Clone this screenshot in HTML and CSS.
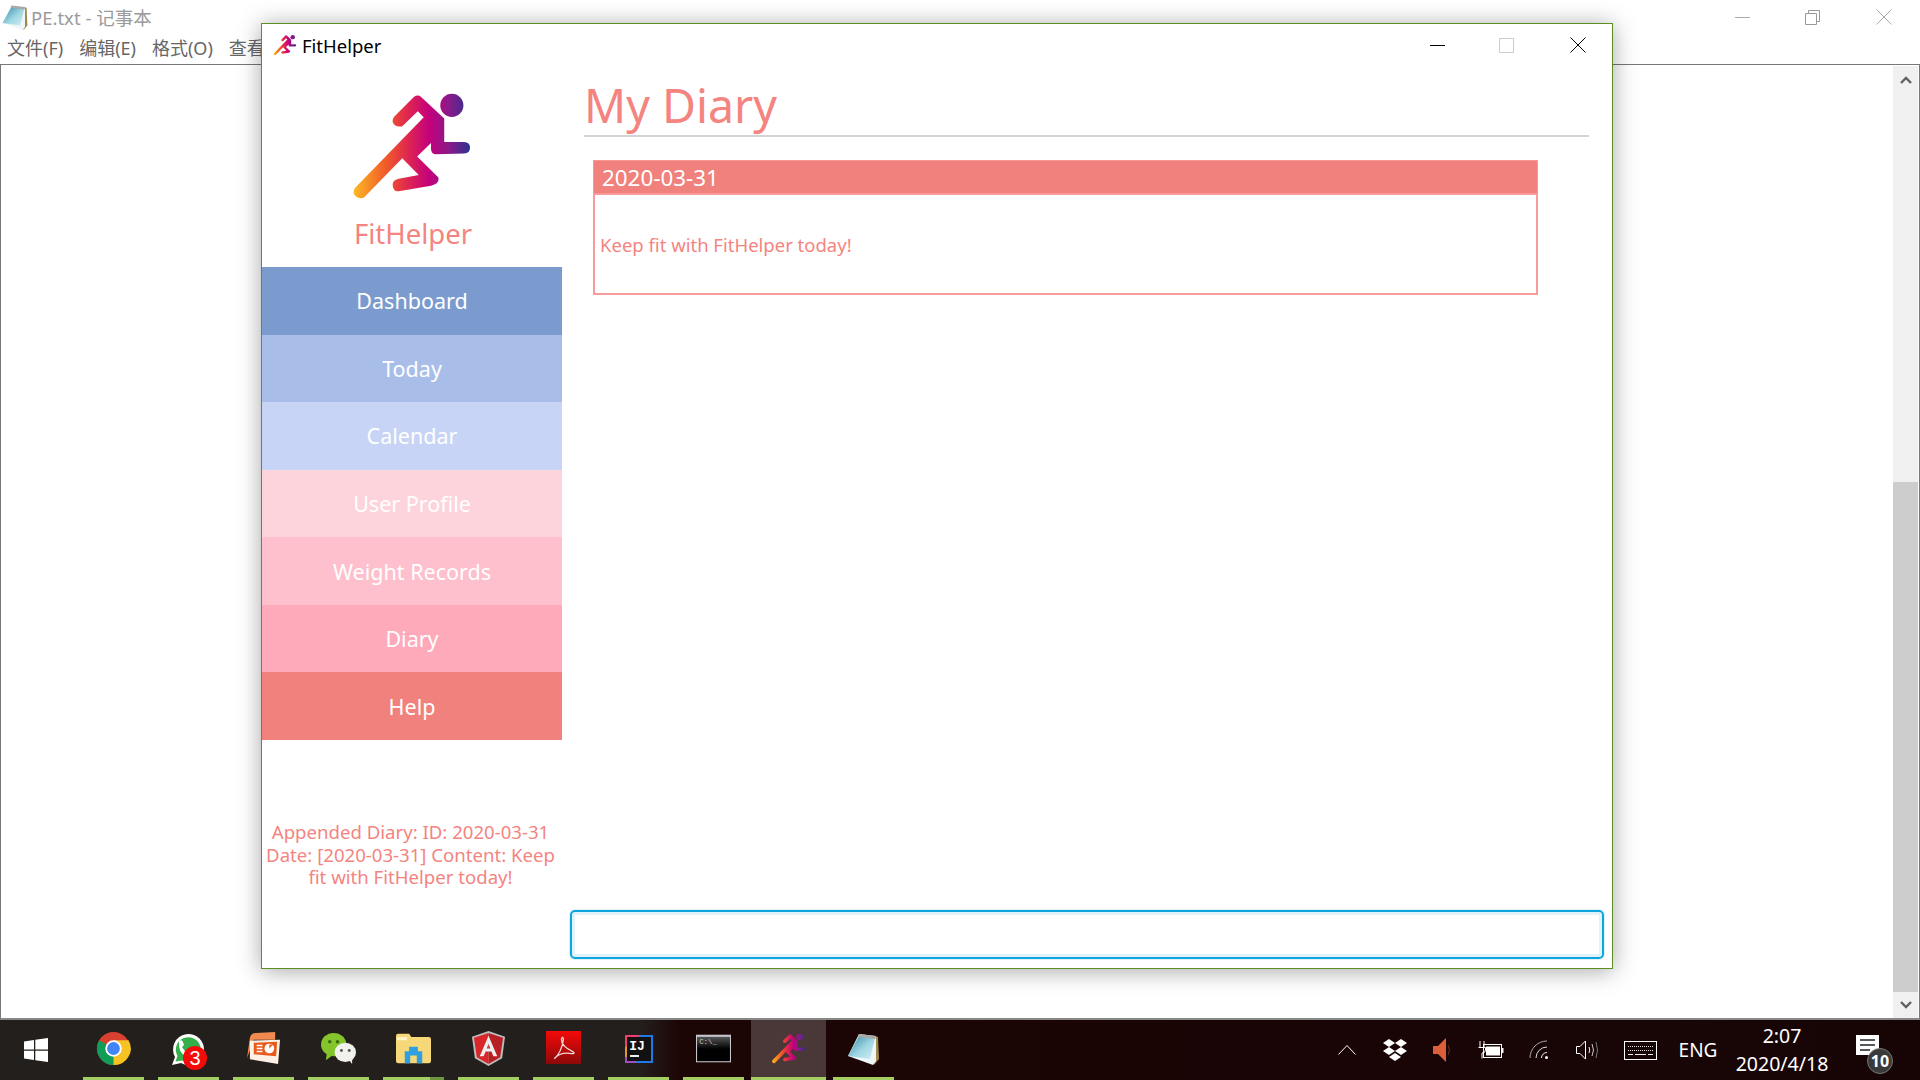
FILE: index.html
```html
<!DOCTYPE html>
<html>
<head>
<meta charset="utf-8">
<title>FitHelper</title>
<link rel="stylesheet" href="styles.css">
</head>
<body>
<svg class="defs" width="0" height="0">
  <defs>
    <linearGradient id="runGrad" gradientUnits="userSpaceOnUse" x1="70" y1="0" x2="423" y2="0">
      <stop offset="0" stop-color="#fdb924"/>
      <stop offset="0.28" stop-color="#f15a29"/>
      <stop offset="0.46" stop-color="#e0284f"/>
      <stop offset="0.65" stop-color="#c4007c"/>
      <stop offset="0.82" stop-color="#8a1a88"/>
      <stop offset="1" stop-color="#2e3192"/>
    </linearGradient>
    <linearGradient id="padGrad" x1="0" y1="0" x2="1" y2="1">
      <stop offset="0" stop-color="#2f86a5"/>
      <stop offset="0.55" stop-color="#9fd6e2"/>
      <stop offset="1" stop-color="#d5f0f4"/>
    </linearGradient>
    <linearGradient id="pdfGrad" x1="0" y1="0" x2="0" y2="1">
      <stop offset="0" stop-color="#f40a0a"/>
      <stop offset="1" stop-color="#8d0808"/>
    </linearGradient>
    <linearGradient id="cmdGrad" x1="0" y1="0" x2="0" y2="1">
      <stop offset="0" stop-color="#555"/>
      <stop offset="0.5" stop-color="#000"/>
    </linearGradient>
    <symbol id="runner" viewBox="60 30 375 330">
      <circle cx="368" cy="72" r="35" fill="url(#runGrad)"/>
      <path fill="url(#runGrad)" d="M265 90 L283 108 L75 322 Q66 336 76 346 Q90 358 103 350 L218 232 L268 283 L207 294 Q188 298 189 314 Q191 334 207 332 L305 315 Q328 310 328 295 Q328 288 322 285 L263 227 L305 186 L305 205 Q306 220 320 220 L405 218 Q423 216 423 200 Q423 184 405 183 L345 183 L345 112 L275 47 Q265 38 253 47 L195 105 Q186 115 190 125 Q196 139 218 135 Z"/>
    </symbol>
    <symbol id="notepad-ic" viewBox="0 0 35 35">
      <path d="M29 5 L32 6 L33 28 L28 34 Z" fill="#a08a50"/>
      <path d="M13 3 L30 5 L30 30 L27 34 L2 25 Z" fill="#eef6f7"/>
      <path d="M13 5 L29 7 L24 28 L2 25 Z" fill="url(#padGrad)"/>
      <path d="M13 3 L30 5 L29.500 8 L12 6 Z" fill="#a9a9a9"/>
    </symbol>
  </defs>
</svg>

<div class="screen">
  <div class="notepad">
    <div class="np-title">
      <svg class="np-icon"><use href="#notepad-ic"/></svg>
      <span>PE.txt - 记事本</span>
      <div class="np-controls">
        <i class="np-min"></i>
        <svg class="np-restore" viewBox="0 0 15 15"><path d="M3.500 3.500 V.5 H14.500 V11.500 H11.500 M.5 3.500 H11.500 V14.500 H.5 Z" fill="none" stroke="#999"/></svg>
        <svg class="np-close" viewBox="0 0 16 16"><path d="M.5 .5 L15.500 15.500 M15.500 .5 L.5 15.500" stroke="#aaa"/></svg>
      </div>
    </div>
    <div class="np-menu">
      <span>文件(F)</span>
      <span>编辑(E)</span>
      <span>格式(O)</span>
      <span>查看(V)</span>
    </div>
    <div class="np-edit">
      <div class="np-scroll">
        <div class="sb-btn"><svg viewBox="0 0 12 9"><path d="M1 8 L6 3 L11 8" fill="none" stroke="#606060" stroke-width="2.400"/></svg></div>
        <div class="sb-thumb"></div>
        <div class="sb-btn"><svg viewBox="0 0 12 9"><path d="M1 1 L6 6 L11 1" fill="none" stroke="#606060" stroke-width="2.400"/></svg></div>
      </div>
    </div>
  </div>

  <div class="taskbar">
    <div class="start">
      <svg viewBox="0 0 24 24"><path fill="#fff" d="M0 3.500 L10 2 V11.400 H0 Z M11.300 1.800 L24 0 V11.400 H11.300 Z M0 12.700 H10 V22 L0 20.500 Z M11.300 12.700 H24 V24 L11.300 22.200 Z"/></svg>
    </div>
    <div class="task">
      <svg viewBox="0 0 34 34">
        <circle cx="17" cy="17" r="16" fill="#d8412f"/>
        <path d="M17 17 L3.100 9 A16 16 0 0 0 17 33 Z" fill="#0f9d58"/>
        <path d="M17 9 H31.600 A16 16 0 0 1 17 33 Z" fill="#f7c223"/>
        <circle cx="17" cy="17" r="8" fill="#fff"/>
        <circle cx="17" cy="17" r="6.200" fill="#4285f4"/>
      </svg>
    </div>
    <div class="task">
      <svg class="ic-wa" viewBox="0 0 40 40">
        <path d="M5 35 L8 27 A15.500 15.500 0 1 1 14 33 Z" fill="#fff"/>
        <path d="M8.500 31.500 L10.500 26 A12.500 12.500 0 1 1 15 30.500 Z" fill="#33b04a"/>
        <path d="M12 11 Q15 9 16 12 L17 15 L15 17 Q17 21 21 23 L23 21 L25 23 Q25 27 22 27 Q11 25 12 11 Z" fill="#fff"/>
        <circle cx="28" cy="28" r="12" fill="#f50a0a"/>
        <text class="task-num" x="28" y="35">3</text>
      </svg>
    </div>
    <div class="task">
      <svg viewBox="0 0 36 34">
        <path d="M1 27 L4 6 Q5 1 10 1 L30 0 L30 8 L8 8 Z" fill="#f08a50"/>
        <path d="M4 9 L35 8 L33 33 L4 28 Z" fill="#fdf1e6"/>
        <path d="M8 11 L32 10 L31 25 L8 23 Z" fill="#e85a1c"/>
        <path d="M11 14 H17 M11 17 H17 M11 20 H17" stroke="#fff" stroke-width="1.500"/>
        <circle cx="24" cy="17" r="5" fill="#fff"/>
        <path d="M24 17 V13 H28 Z" fill="#e85a1c"/>
      </svg>
    </div>
    <div class="task">
      <svg viewBox="0 0 36 34">
        <ellipse cx="13" cy="13" rx="13" ry="12" fill="#84c52b"/>
        <path d="M6 22 L5 29 L12 24 Z" fill="#84c52b"/>
        <circle cx="9" cy="10" r="1.800" fill="#3c6b10"/>
        <circle cx="17" cy="10" r="1.800" fill="#3c6b10"/>
        <ellipse cx="25" cy="21" rx="11" ry="10" fill="#f1f1ee"/>
        <path d="M29 29 L32 33 L32 26 Z" fill="#f1f1ee"/>
        <circle cx="21" cy="19" r="1.500" fill="#555"/>
        <circle cx="29" cy="19" r="1.500" fill="#555"/>
      </svg>
    </div>
    <div class="task task-split">
      <svg viewBox="0 0 32 27">
        <path d="M0 2 Q0 0 2 0 H12 L14 3 H30 Q32 3 32 5 V25 Q32 27 30 27 H2 Q0 27 0 25 Z" fill="#f6d879"/>
        <path d="M1 3 H10 V6 H1 Z" fill="#fff3c4"/>
        <path d="M8 27 V16 H12 V12 H20 V16 H24 V27 H19 V20 H13 V27 Z" fill="#2f9fe0"/>
      </svg>
    </div>
    <div class="task">
      <svg viewBox="0 0 34 36">
        <path d="M17 0 L34 6 L31 28 L17 36 L3 28 L0 6 Z" fill="#bdbdbd"/>
        <path d="M17 2 L32 7 L29 27 L17 34 Z" fill="#b81f24"/>
        <path d="M17 2 L2 7 L5 27 L17 34 Z" fill="#d9262b"/>
        <path d="M17 5 L8 26 H12 L14 21 H20 L22 26 H26 Z M15.200 18 L17 13 L18.800 18 Z" fill="#eee" fill-rule="evenodd"/>
      </svg>
    </div>
    <div class="task">
      <svg viewBox="0 0 34 34">
        <rect width="34" height="32" fill="url(#pdfGrad)"/>
        <path d="M8 27 Q15 21 17 8 Q16 4 15 8 Q15 15 26 20 Q29 22 25 22 Q14 20 8 27 Z" fill="none" stroke="#f3d6d6" stroke-width="1.300"/>
      </svg>
    </div>
    <div class="task">
      <svg class="ic-ij" viewBox="0 0 28 28">
        <rect width="28" height="28" fill="#1f7ae8"/>
        <path d="M0 0 H16 L6 6 L0 20 Z" fill="#ef3f6d"/>
        <path d="M0 12 L5 10 L6 22 L0 24 Z" fill="#e8932c"/>
        <path d="M0 22 L8 22 L12 28 H0 Z" fill="#a04fc0"/>
        <rect x="2" y="2" width="24" height="24" fill="#111"/>
        <text class="task-ij" x="12" y="15">IJ</text>
        <rect x="5" y="20" width="9" height="2" fill="#eee"/>
      </svg>
    </div>
    <div class="task">
      <svg viewBox="0 0 33 26">
        <rect width="33" height="26" fill="#c4c6cc"/>
        <rect x="1" y="2" width="31" height="23" fill="url(#cmdGrad)"/>
        <text class="task-cmd" x="3" y="9">C:\_</text>
      </svg>
    </div>
    <div class="task task-active">
      <svg viewBox="0 0 34 34"><use href="#runner"/></svg>
    </div>
    <div class="task">
      <svg viewBox="0 0 35 35"><use href="#notepad-ic"/></svg>
    </div>

    <div class="tray">
      <div class="tray-item"><svg class="i-caret" viewBox="0 0 18 10"><path d="M.5 9.500 L9 .5 L17.500 9.500" fill="none" stroke="#fff"/></svg></div>
      <div class="tray-item"><svg class="i-box" viewBox="0 0 24 22"><path fill="#fff" d="M6 0 L12 4 L6 8 L0 4 Z M18 0 L24 4 L18 8 L12 4 Z M6 8 L12 12 L6 16 L0 12 Z M18 8 L24 12 L18 16 L12 12 Z M12 14 L18 18 L12 22 L6 18 Z"/></svg></div>
      <div class="tray-item"><svg class="i-vol" viewBox="0 0 20 24"><path fill="#d9603a" d="M0 8 H5 L13 0 V24 L5 16 H0 Z"/><path d="M15 7 Q18 12 15 17" fill="none" stroke="#6a3020"/></svg></div>
      <div class="tray-item"><svg class="i-batt" viewBox="0 0 26 18"><path d="M2 0 V6 M6 0 V6 M.5 6.500 H7.500 V9 Q7.500 12 4 12 V17.500" fill="none" stroke="#fff"/><rect x="5.500" y="3.500" width="18" height="13" fill="none" stroke="#fff"/><rect x="8" y="5.500" width="14" height="9" fill="#fff"/><rect x="24" y="7" width="1.500" height="5" fill="#fff"/></svg></div>
      <div class="tray-item"><svg class="i-wifi" viewBox="0 0 20 20"><path d="M18 1 A17 17 0 0 0 1 18" fill="none" stroke="#aaa"/><path d="M18 7 A11 11 0 0 0 7 18" fill="none" stroke="#ddd"/><path d="M18 12.500 A5.500 5.500 0 0 0 12.500 18" fill="none" stroke="#eee"/><circle cx="17.500" cy="17.500" r="1.500" fill="#fff"/></svg></div>
      <div class="tray-item"><svg class="i-spk" viewBox="0 0 23 20"><path fill="none" stroke="#fff" d="M.5 6.500 H4 L9.500 1 V19 L4 13.500 H.5 Z"/><path d="M13 7 Q14.500 10 13 13" fill="none" stroke="#eee"/><path d="M16 4 Q19 10 16 16" fill="none" stroke="#ccc"/><path d="M20 2 Q23 10 20 18" fill="none" stroke="#777"/></svg></div>
      <div class="tray-kbd"><svg viewBox="0 0 33 19"><rect x=".5" y=".5" width="32" height="18" fill="none" stroke="#fff"/><path d="M4 5.500 H29 M4 9.500 H29" stroke="#ddd" stroke-dasharray="1 1"/><path d="M4 13.500 H9 M11 13.500 H22 M24 13.500 H29" stroke="#eee"/></svg></div>
      <div class="tray-lang">ENG</div>
      <div class="clock">
        <div class="clock-time">2:07</div>
        <div class="clock-date">2020/4/18</div>
      </div>
      <div class="notif">
        <svg viewBox="0 0 23 20"><path d="M0 0 H23 V20 H0 Z" fill="#fff"/><path d="M4 5 H19 M4 10 H19 M4 15 H14" stroke="#222" stroke-width="1.500"/></svg>
        <span class="notif-badge">10</span>
      </div>
    </div>
  </div>

  <div class="fitwin">
    <div class="fw-title">
      <svg class="fw-icon"><use href="#runner"/></svg>
      <span>FitHelper</span>
      <div class="fw-controls">
        <i class="fw-min"></i>
        <i class="fw-max"></i>
        <svg class="fw-close" viewBox="0 0 16 16"><path d="M.5 .5 L15.500 15.500 M15.500 .5 L.5 15.500" stroke="#000"/></svg>
      </div>
    </div>
    <div class="fw-body">
      <div class="sidebar">
        <svg class="logo"><use href="#runner"/></svg>
        <div class="brand">FitHelper</div>
        <div class="nav">
          <div class="nav-item nav-dashboard">Dashboard</div>
          <div class="nav-item nav-today">Today</div>
          <div class="nav-item nav-calendar">Calendar</div>
          <div class="nav-item nav-profile">User Profile</div>
          <div class="nav-item nav-weight">Weight Records</div>
          <div class="nav-item nav-diary">Diary</div>
          <div class="nav-item nav-help">Help</div>
        </div>
        <div class="result">Appended Diary: ID: 2020-03-31 Date: [2020-03-31] Content: Keep fit with FitHelper today!</div>
      </div>
      <div class="main">
        <h1 class="page-title">My Diary</h1>
        <div class="card">
          <div class="card-head">2020-03-31</div>
          <div class="card-body">Keep fit with FitHelper today!</div>
        </div>
        <input class="cmd-box" type="text">
      </div>
    </div>
  </div>
</div>
</body>
</html>
```

FILE: styles.css
```css
html, body { margin: 0; padding: 0; }
body { font-family: "Noto Sans", "Noto Sans CJK SC", sans-serif; background: #fff; overflow: hidden; }
.defs { position: absolute; }

.screen { position: relative; width: 1920px; height: 1080px; display: flex; flex-direction: column; overflow: hidden; }

/* notepad behind */
.notepad { flex: 1; display: flex; flex-direction: column; min-height: 0; background: #fff; }
.np-title { height: 34px; display: flex; align-items: center; padding-left: 1px; font-size: 18.500px; color: #9a9a9a; flex-shrink: 0; }
.np-icon { width: 28px; height: 28px; margin-right: 2px; }
.np-controls { margin-left: auto; display: flex; align-items: center; }
.np-min { width: 15px; height: 1px; background: #aaa; margin-right: 55px; }
.np-restore { width: 15px; height: 15px; margin-right: 56px; }
.np-close { width: 16px; height: 16px; margin-right: 28px; }
.np-menu { height: 30px; box-sizing: border-box; padding: 0 0 5px 7px; display: flex; gap: 16px; align-items: center; font-size: 18px; color: #666; flex-shrink: 0; }
.np-edit { flex: 1; display: flex; justify-content: flex-end; border-top: 1px solid #777; border-left: 1px solid #777; border-right: 1px solid #777; border-bottom: 2px solid #888; padding: 1px 0 0; min-height: 0; }
.np-scroll { width: 25px; background: #f0f0f0; display: flex; flex-direction: column; margin-right: 1px; }
.sb-btn { height: 26px; display: flex; align-items: center; justify-content: center; flex-shrink: 0; }
.sb-btn svg { width: 12px; height: 9px; }
.sb-thumb { height: 510px; margin-top: auto; background: #cdcdcd; }

/* taskbar */
.taskbar { height: 60px; flex-shrink: 0; display: flex; background: linear-gradient(90deg, #231f1c 0, #231f1c 640px, #1c0505 680px, #170505 100%); color: #fff; }
.start { width: 76px; display: flex; align-items: center; justify-content: center; box-sizing: border-box; padding-right: 4px; }
.start svg { width: 24px; height: 24px; }
.task { width: 75px; position: relative; display: flex; align-items: center; justify-content: center; }
.task svg { width: 35px; height: 35px; margin-top: -3px; overflow: visible; }
.task svg.ic-wa { width: 40px; height: 40px; margin: 0 3px 0 0; }
.task svg.ic-ij { width: 28px; height: 28px; }
.task::after { content: ""; position: absolute; left: 7px; right: 7px; bottom: 0; height: 3px; background: #a3cf62; }
.task-split::after { background: linear-gradient(90deg, #a3cf62 0, #a3cf62 77%, #6f9440 77%); }
.task-active { background: #4a3838; }
.task-active::after { left: 0; right: 0; }
.task-num { fill: #fff; font-size: 20px; font-family: "Liberation Sans", sans-serif; text-anchor: middle; }
.task-ij { fill: #fff; font-size: 13px; font-weight: 700; font-family: "Liberation Mono", monospace; text-anchor: middle; }
.task-cmd { fill: #ccc; font-size: 7px; font-family: "Liberation Mono", monospace; }

.tray { margin-left: auto; display: flex; align-items: center; padding-right: 17px; }
.tray-item { width: 48px; display: flex; align-items: center; justify-content: center; }
.i-caret { width: 18px; height: 10px; }
.i-box { width: 24px; height: 22px; }
.i-vol { width: 22px; height: 24px; }
.i-spk { width: 23px; height: 20px; }
.i-batt { width: 26px; height: 18px; }
.i-wifi { width: 20px; height: 20px; }
.tray-kbd { width: 58px; display: flex; justify-content: center; }
.tray-kbd svg { width: 33px; height: 19px; }
.tray-lang { width: 58px; text-align: center; font-size: 19px; }
.clock { width: 110px; text-align: center; font-size: 19.500px; line-height: 28px; }
.notif { width: 66px; height: 60px; position: relative; display: flex; justify-content: center; align-items: center; }
.notif svg { width: 23px; height: 20px; margin: -10px 0 0 -6px; }
.notif-badge { position: absolute; left: 30px; top: 28px; width: 26px; height: 26px; border-radius: 50%; background: #3a3a3a; border: 1px solid #777; box-sizing: border-box; font-size: 16px; font-weight: 700; line-height: 24px; text-align: center; }

/* the FitHelper window */
.fitwin { position: absolute; left: 261px; top: 23px; width: 1352px; height: 946px; box-sizing: border-box; border: 1px solid #5b8f22; background: #fff; box-shadow: 0 2px 22px rgba(0,0,0,.35); display: flex; flex-direction: column; }
.fw-title { height: 42px; display: flex; align-items: center; padding-left: 11px; font-size: 18.500px; color: #000; flex-shrink: 0; }
.fw-icon { width: 24px; height: 24px; margin-right: 5px; }
.fw-controls { margin-left: auto; display: flex; align-items: center; }
.fw-min { width: 15px; height: 1px; background: #000; margin-right: 54px; margin-left: 1px; }
.fw-max { width: 13px; height: 13px; border: 1px solid #ccc; margin-right: 56px; }
.fw-close { width: 16px; height: 16px; margin-right: 26px; }
.fw-body { flex: 1; display: flex; min-height: 0; }

.sidebar { width: 300px; flex-shrink: 0; display: flex; flex-direction: column; align-items: stretch; }
.logo { width: 124px; height: 110px; margin: 25px 0 0 88px; flex-shrink: 0; }
.brand { font-size: 27.500px; line-height: 36px; color: #f4847f; text-align: center; margin-top: 15px; padding-left: 2px; }
.nav { height: 473px; margin-top: 15px; display: flex; flex-direction: column; flex-shrink: 0; }
.nav-item { flex: 1; display: flex; align-items: center; justify-content: center; color: #fff; font-size: 21.500px; }
.nav-dashboard { background: #7b9bcf; }
.nav-today { background: #a9bde9; }
.nav-calendar { background: #c7d4f5; }
.nav-profile { background: #fed4dc; }
.nav-weight { background: #fec0cd; }
.nav-diary { background: #feaaba; }
.nav-help { background: #f0817d; }
.result { margin-top: 81px; padding: 0 3px 0 0; color: #f4847f; font-size: 18.600px; line-height: 22.500px; text-align: center; }

.main { flex: 1; display: flex; flex-direction: column; padding: 0 8px 9px 8px; min-width: 0; }
.page-title { margin: 0 15px 0 14px; font-size: 46.500px; font-weight: 400; line-height: 78px; height: 69px; color: #f4847f; border-bottom: 2px solid #d3d3d3; }
.card { margin: 23px 66px 0 23px; }
.card-head { height: 34px; box-sizing: border-box; background: #f0817d; border: 1px solid #fb9795; color: #fff; font-size: 22.400px; line-height: 33px; padding-left: 8px; }
.card-body { height: 101px; box-sizing: border-box; border: 2px solid #f79c9a; border-top-width: 1px; color: #f4847f; font-size: 18.500px; display: flex; align-items: center; padding-left: 5px; }
.cmd-box { margin-top: auto; height: 49px; box-sizing: border-box; width: 100%; border: 2px solid #0ea5dc; border-radius: 5px; box-shadow: inset 0 0 0 3px #e0f2fa, 0 0 0 1px #e0f2fa; outline: none; background: #fff; padding: 0; }
```
